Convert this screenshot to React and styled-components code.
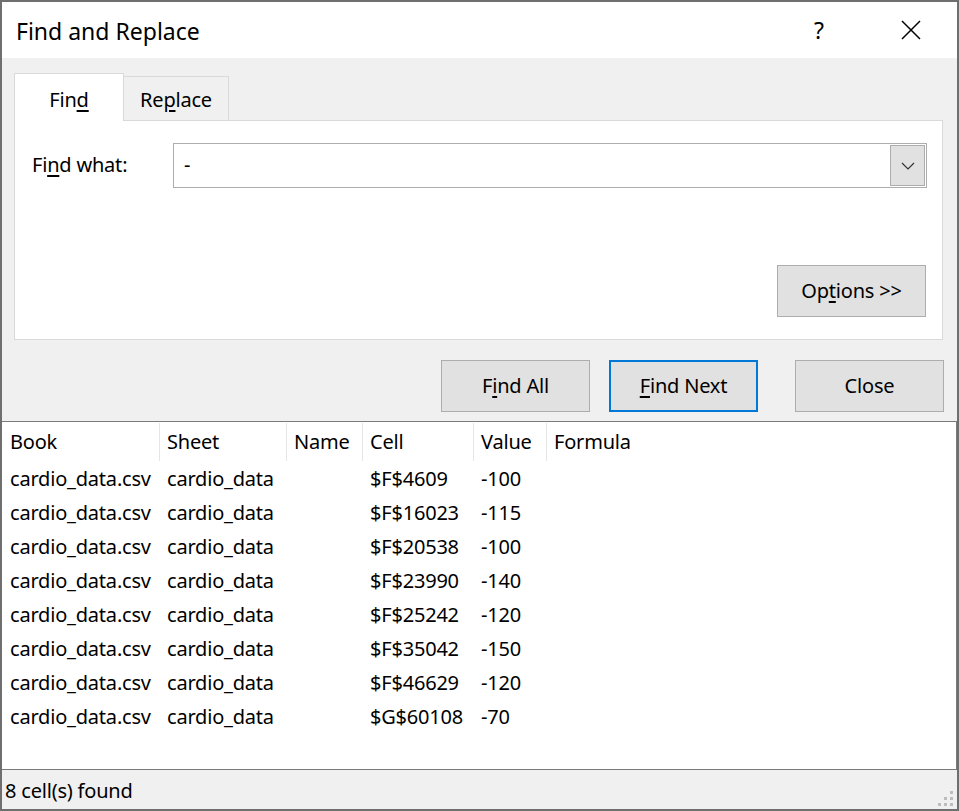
import React from 'react';
import styled, { createGlobalStyle } from 'styled-components';

const GlobalStyle = createGlobalStyle`
  html, body {
    margin: 0;
    padding: 0;
    background: #6f6f6f;
  }
  body {
    font-family: "Segoe UI", "Noto Sans", "Open Sans", sans-serif;
    letter-spacing: -0.2px;
    color: #000;
  }
  * { box-sizing: border-box; }
`;

const Dialog = styled.div`
  display: flex;
  flex-direction: column;
  width: 955px;
  height: 807px;
  margin: 2px 2px 2px 2px;
  background: #f0f0f0;
`;

const TitleBar = styled.div`
  display: flex;
  align-items: center;
  height: 56px;
  padding-left: 14px;
  background: #fff;
`;

const Title = styled.div`
  flex: 1;
  font-size: 23px;
  letter-spacing: 0;
  padding-top: 2px;
`;

const TitleButton = styled.div`
  display: flex;
  align-items: center;
  justify-content: center;
  width: ${p => p.w}px;
  height: 56px;
  font-size: 23px;
`;

const Upper = styled.div`
  display: flex;
  flex-direction: column;
  padding: 15px 14px 0 12px;
`;

const TabRow = styled.div`
  display: flex;
  align-items: flex-end;
  position: relative;
  z-index: 1;
  margin-bottom: -1px;
`;

const Tab = styled.div`
  display: flex;
  align-items: center;
  justify-content: center;
  width: ${p => p.w}px;
  height: ${p => (p.active ? 48 : 45)}px;
  padding-top: ${p => (p.active ? 4 : 2)}px;
  background: ${p => (p.active ? '#fff' : '#f0f0f0')};
  border: 1px solid #d9d9d9;
  border-bottom: ${p => (p.active ? 'none' : '1px solid #d9d9d9')};
  border-left: ${p => (p.active ? '1px solid #d9d9d9' : 'none')};
  font-size: 20px;
`;

const Panel = styled.div`
  display: flex;
  flex-direction: column;
  height: 220px;
  padding: 22px 15px 22px 17px;
  background: #fff;
  border: 1px solid #d9d9d9;
`;

const FieldRow = styled.div`
  display: flex;
  align-items: center;
`;

const Label = styled.div`
  width: 141px;
  font-size: 20px;
  padding-bottom: 2px;
`;

const Combo = styled.div`
  display: flex;
  align-items: center;
  width: 754px;
  height: 45px;
  padding: 1px;
  border: 1px solid #adadad;
  background: #fff;
`;

const ComboText = styled.div`
  flex: 1;
  padding-left: 9px;
  font-size: 20px;
  padding-bottom: 3px;
`;

const ComboButton = styled.div`
  display: flex;
  align-items: center;
  justify-content: center;
  width: 35px;
  height: 41px;
  background: #e1e1e1;
  border: 1px solid #adadad;
`;

const Spacer = styled.div`
  flex: 1;
`;

const RightRow = styled.div`
  display: flex;
  justify-content: flex-end;
  margin-right: 1px;
`;

const Button = styled.div`
  display: flex;
  align-items: center;
  justify-content: center;
  width: 149px;
  height: 52px;
  margin-left: ${p => p.gap || 0}px;
  padding-bottom: 2px;
  background: #e1e1e1;
  border: ${p => (p.focused ? '2px solid #0078d7' : '1px solid #adadad')};
  font-size: 20px;
`;

const ButtonRow = styled.div`
  display: flex;
  justify-content: flex-end;
  margin: 20px -1px 0 0;
`;

const Key = styled.u`
  text-decoration-thickness: 1.5px;
  text-underline-offset: 3px;
`;

const ResultList = styled.div`
  flex: 1;
  margin-top: 9px;
  padding-left: 1px;
  background: #fff;
  border-top: 1px solid #7a7a7a;
  border-right: 1px solid #7a7a7a;
`;

const Grid = styled.div`
  display: grid;
  grid-template-columns: 157px 127px 76px 111px 73px 1fr;
`;

const HeadCell = styled.div`
  display: flex;
  align-items: center;
  height: 40px;
  padding: 0 0 2px 7px;
  font-size: 20px;
  box-shadow: ${p => (p.last ? 'none' : 'inset -1px 0 0 #e5e5e5')};
  border-top: 1px solid #fff;
  border-bottom: 1px solid #fff;
`;

const Cell = styled.div`
  display: flex;
  align-items: center;
  height: 34px;
  padding: 0 0 2px 7px;
  font-size: 20px;
  white-space: nowrap;
`;

const StatusBar = styled.div`
  display: flex;
  align-items: center;
  justify-content: space-between;
  height: 40px;
  padding: 0 4px 0 3px;
  border-top: 1px solid #7a7a7a;
  font-size: 20px;
`;

const StatusText = styled.div`
  padding-top: 1px;
`;

const Grip = styled.svg`
  align-self: flex-end;
  margin-bottom: 3px;
`;

const columns = ['Book', 'Sheet', 'Name', 'Cell', 'Value', 'Formula'];

const results = [
  ['$F$4609', '-100'],
  ['$F$16023', '-115'],
  ['$F$20538', '-100'],
  ['$F$23990', '-140'],
  ['$F$25242', '-120'],
  ['$F$35042', '-150'],
  ['$F$46629', '-120'],
  ['$G$60108', '-70'],
];

function CloseIcon() {
  return (
    <svg width="20" height="20" viewBox="0 0 20 20">
      <path d="M1 1 L19 19 M19 1 L1 19" stroke="#000" strokeWidth="1.5" fill="none" />
    </svg>
  );
}

function Chevron() {
  return (
    <svg width="14" height="8" viewBox="0 0 14 8">
      <path d="M1 1 L7 7 L13 1" stroke="#333" strokeWidth="1.2" fill="none" />
    </svg>
  );
}

function ResizeGrip() {
  const dots = [
    [12, 0],
    [6, 6], [12, 6],
    [0, 12], [6, 12], [12, 12],
  ];
  return (
    <Grip width="15" height="15" viewBox="0 0 15 15">
      {dots.map(([x, y]) => (
        <rect key={`${x}-${y}`} x={x} y={y} width="3" height="3" fill="#bdbdbd" />
      ))}
    </Grip>
  );
}

export default function App() {
  return (
    <>
      <GlobalStyle />
      <Dialog>
        <TitleBar>
          <Title>Find and Replace</Title>
          <TitleButton w={92}>?</TitleButton>
          <TitleButton w={92}>
            <CloseIcon />
          </TitleButton>
        </TitleBar>

        <Upper>
          <TabRow>
            <Tab active w={110}>
              Fin<Key>d</Key>
            </Tab>
            <Tab w={105}>
              Re<Key>p</Key>lace
            </Tab>
          </TabRow>
          <Panel>
            <FieldRow>
              <Label>
                Fi<Key>n</Key>d what:
              </Label>
              <Combo>
                <ComboText>-</ComboText>
                <ComboButton>
                  <Chevron />
                </ComboButton>
              </Combo>
            </FieldRow>
            <Spacer />
            <RightRow>
              <Button>
                Op<Key>t</Key>ions &gt;&gt;
              </Button>
            </RightRow>
          </Panel>
          <ButtonRow>
            <Button>
              F<Key>i</Key>nd All
            </Button>
            <Button focused gap={19}>
              <Key>F</Key>ind Next
            </Button>
            <Button gap={37}>Close</Button>
          </ButtonRow>
        </Upper>

        <ResultList>
          <Grid>
            {columns.map((c, i) => (
              <HeadCell key={c} last={i === columns.length - 1}>
                {c}
              </HeadCell>
            ))}
            {results.map(([cell, value]) => (
              <React.Fragment key={cell}>
                <Cell>cardio_data.csv</Cell>
                <Cell>cardio_data</Cell>
                <Cell />
                <Cell>{cell}</Cell>
                <Cell>{value}</Cell>
                <Cell />
              </React.Fragment>
            ))}
          </Grid>
        </ResultList>

        <StatusBar>
          <StatusText>8 cell(s) found</StatusText>
          <ResizeGrip />
        </StatusBar>
      </Dialog>
    </>
  );
}
